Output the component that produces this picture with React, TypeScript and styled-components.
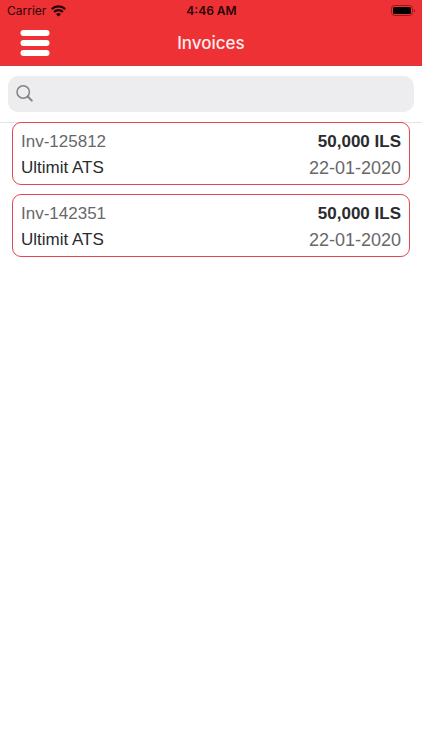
import React, { useState } from "react";
import styled, { createGlobalStyle } from "styled-components";

const GlobalStyle = createGlobalStyle`
  *, *::before, *::after { box-sizing: border-box; }
  body {
    margin: 0;
    background: #ffffff;
    font-family: "Liberation Sans", Arial, sans-serif;
  }
`;

const Screen = styled.div`
  min-height: 100vh;
  background: #ffffff;
`;

const Header = styled.header`
  background: #ee3135;
  border-bottom: 1px solid #d9383c;
  font-family: Inter, sans-serif;
`;

const StatusBar = styled.div`
  display: grid;
  grid-template-columns: 1fr auto 1fr;
  align-items: center;
  height: 22px;
  padding: 0 6px 0 7px;
  color: #2b0506;
  font-size: 12px;
  line-height: 22px;
`;

const Carrier = styled.span`
  display: flex;
  align-items: center;
  gap: 5px;
`;

const Time = styled.time`
  font-weight: 600;
`;

const BatteryIcon = styled.svg`
  justify-self: end;
`;

const NavBar = styled.div`
  display: grid;
  grid-template-columns: 1fr auto 1fr;
  align-items: center;
  height: 43px;
  padding: 0 20px 2px;
`;

const MenuButton = styled.button`
  display: flex;
  justify-self: start;
  padding: 0;
  border: 0;
  background: none;
  cursor: pointer;
`;

const Title = styled.h1`
  margin: 0;
  color: #ffecec;
  font-size: 17px;
  font-weight: 500;
  line-height: 24px;
`;

const SearchBar = styled.form`
  padding: 10px 8px;
  border-bottom: 1px solid #e4e4e5;
`;

const SearchField = styled.label`
  display: flex;
  align-items: center;
  gap: 8px;
  height: 36px;
  padding: 0 8px;
  border-radius: 10px;
  background: #ededef;
`;

const SearchInput = styled.input`
  flex: 1;
  min-width: 0;
  padding: 0;
  border: 0;
  outline: 0;
  background: transparent;
  color: #2b2b2d;
  font: 17px/24px "Liberation Sans", Arial, sans-serif;
`;

const InvoiceList = styled.ul`
  display: flex;
  flex-direction: column;
  gap: 9px;
  margin: -1px 0 0;
  padding: 0 12px;
  list-style: none;
`;

const InvoiceCard = styled.li`
  display: flex;
  flex-direction: column;
  padding: 6px 8px 3px;
  border: 1px solid #e2474f;
  border-radius: 9px;
  background: #ffffff;
`;

const InvoiceLine = styled.div`
  display: flex;
  justify-content: space-between;
  font-size: 17px;
  line-height: 26px;
`;

const InvoiceText = styled.span<{ $muted?: boolean; $bold?: boolean }>`
  color: ${({ $muted }) => ($muted ? "#68686a" : "#2b2b2d")};
  font-weight: ${({ $bold }) => ($bold ? 700 : 400)};
`;

const InvoiceDate = styled.time`
  color: #68686a;
  font-size: 18px;
`;

const invoices = [
  { id: "Inv-125812", amount: "50,000 ILS", customer: "Ultimit ATS", date: "22-01-2020" },
  { id: "Inv-142351", amount: "50,000 ILS", customer: "Ultimit ATS", date: "22-01-2020" },
];

export default function App() {
  const [query, setQuery] = useState("");
  const shown = invoices.filter((invoice) =>
    `${invoice.id} ${invoice.customer}`.toLowerCase().includes(query.toLowerCase())
  );

  return (
    <Screen>
      <GlobalStyle />
      <Header>
        <StatusBar>
          <Carrier>
            Carrier
            <svg width="15" height="12" viewBox="0 0 15 12" aria-hidden="true">
              <g fill="none" stroke="#1c0304" strokeWidth="2.2">
                <path d="M0.8 4.1a9.5 9.5 0 0 1 13.4 0" />
                <path d="M3.1 6.9a6.2 6.2 0 0 1 8.8 0" />
              </g>
              <path d="M7.5 11.6 5.1 9.2a3.4 3.4 0 0 1 4.8 0z" fill="#1c0304" />
            </svg>
          </Carrier>
          <Time>4:46 AM</Time>
          <BatteryIcon width="25" height="12" viewBox="0 0 25 12" role="img" aria-label="Battery full">
            <rect x="0.5" y="0.5" width="21" height="10" rx="3" fill="none" stroke="#96191c" />
            <rect x="2" y="2" width="18" height="7" rx="1.5" fill="#000000" />
            <path d="M23 4v3.4c1.2-.5 1.2-2.9 0-3.4z" fill="#7d1417" />
          </BatteryIcon>
        </StatusBar>
        <NavBar>
          <MenuButton type="button" aria-label="Menu">
            <svg width="30" height="26" viewBox="0 0 30 26" aria-hidden="true">
              <g fill="#ffffff">
                <rect x="0.5" y="0" width="29" height="6" rx="3" />
                <rect x="0.5" y="10" width="29" height="6" rx="3" />
                <rect x="0.5" y="20" width="29" height="6" rx="3" />
              </g>
            </svg>
          </MenuButton>
          <Title>Invoices</Title>
        </NavBar>
      </Header>
      <main>
        <SearchBar role="search" onSubmit={(event) => event.preventDefault()}>
          <SearchField>
            <svg width="18" height="18" viewBox="0 0 18 18" aria-hidden="true">
              <g fill="none" stroke="#838387" strokeLinecap="round">
                <circle cx="7.2" cy="7" r="6.2" strokeWidth="1.5" />
                <path d="M11.7 11.5 15.8 15.6" strokeWidth="2" />
              </g>
            </svg>
            <SearchInput
              type="text"
              aria-label="Search invoices"
              value={query}
              onChange={(event) => setQuery(event.target.value)}
            />
          </SearchField>
        </SearchBar>
        <InvoiceList>
          {shown.map((invoice) => (
            <InvoiceCard key={invoice.id}>
              <InvoiceLine>
                <InvoiceText $muted>{invoice.id}</InvoiceText>
                <InvoiceText $bold>{invoice.amount}</InvoiceText>
              </InvoiceLine>
              <InvoiceLine>
                <InvoiceText>{invoice.customer}</InvoiceText>
                <InvoiceDate>{invoice.date}</InvoiceDate>
              </InvoiceLine>
            </InvoiceCard>
          ))}
        </InvoiceList>
      </main>
    </Screen>
  );
}
